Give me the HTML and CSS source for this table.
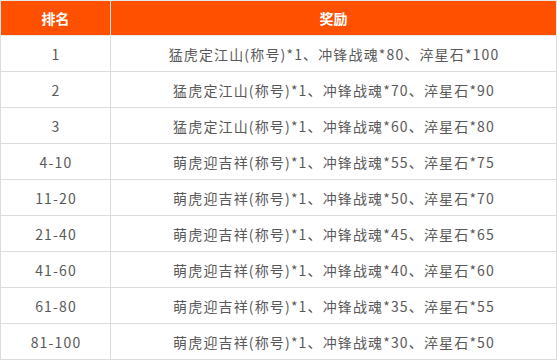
FILE: index.html
```html
<!DOCTYPE html>
<html lang="zh">
<head>
<meta charset="utf-8">
<link rel="stylesheet" href="styles.css">
</head>
<body>
<table class="rank">
  <thead>
    <tr><th class="c1">排名</th><th class="c2">奖励</th></tr>
  </thead>
  <tbody>
    <tr><td>1</td><td>猛虎定江山(称号)*1、冲锋战魂*80、淬星石*100</td></tr>
    <tr><td>2</td><td>猛虎定江山(称号)*1、冲锋战魂*70、淬星石*90</td></tr>
    <tr><td>3</td><td>猛虎定江山(称号)*1、冲锋战魂*60、淬星石*80</td></tr>
    <tr><td>4-10</td><td>萌虎迎吉祥(称号)*1、冲锋战魂*55、淬星石*75</td></tr>
    <tr><td>11-20</td><td>萌虎迎吉祥(称号)*1、冲锋战魂*50、淬星石*70</td></tr>
    <tr><td>21-40</td><td>萌虎迎吉祥(称号)*1、冲锋战魂*45、淬星石*65</td></tr>
    <tr><td>41-60</td><td>萌虎迎吉祥(称号)*1、冲锋战魂*40、淬星石*60</td></tr>
    <tr><td>61-80</td><td>萌虎迎吉祥(称号)*1、冲锋战魂*35、淬星石*55</td></tr>
    <tr><td>81-100</td><td>萌虎迎吉祥(称号)*1、冲锋战魂*30、淬星石*50</td></tr>
  </tbody>
</table>
</body>
</html>
```
FILE: styles.css
```css
html, body {
  margin: 0;
  padding: 0;
  background: #fff;
}
.rank {
  border-collapse: collapse;
  width: 557px;
  table-layout: fixed;
  font-family: "Noto Sans CJK SC", "Noto Sans", sans-serif;
  font-size: 14px;
  color: #595959;
}
.rank th, .rank td {
  border: 1px solid #dcdcdc;
  text-align: center;
  padding: 0;
  box-sizing: border-box;
}
.rank th {
  background: #ff5000;
  color: #fff;
  font-weight: bold;
  border-color: #e8e8e8;
  height: 35px;
}
.rank td {
  height: 36px;
  letter-spacing: 1.15px;
  text-indent: 1px;
}
.c1 { width: 110px; }
```
